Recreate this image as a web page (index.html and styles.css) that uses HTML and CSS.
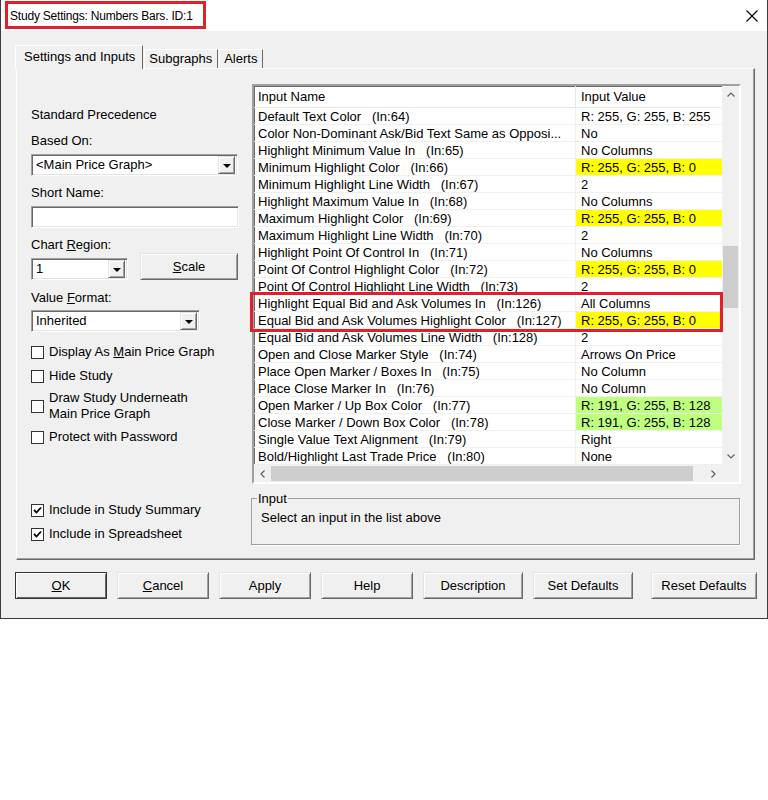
FILE: index.html
```html
<!DOCTYPE html>
<html lang="en">
<head>
  <meta charset="UTF-8" />
  <title>Study Settings</title>
  <link rel="stylesheet" href="styles.css">
</head>
<body>

<div class="window">
  <div class="titlebar">
    <span class="title">Study Settings: Numbers Bars. ID:1</span>
    <svg class="close" width="12" height="12" viewBox="0 0 12 12"><path d="M0.5 0.5 L11.5 11.5 M11.5 0.5 L0.5 11.5" stroke="#000" stroke-width="1.1" fill="none"/></svg>
  </div>
  <div class="title-mark"></div>

  <div class="client">
    <div class="tabs">
      <div class="tab active">Settings and Inputs</div>
      <div class="tab">Subgraphs</div>
      <div class="tab">Alerts</div>
    </div>

    <div class="panel">
      <div class="left">
        <div class="label first">Standard Precedence</div>
        <div class="label gap10">Based On:</div>
        <div class="combo wide">
          <span class="combo-text">&lt;Main Price Graph&gt;</span>
          <span class="drop"><i></i></span>
        </div>
        <div class="label gap9">Short Name:</div>
        <div class="textbox"></div>
        <div class="label gap9">Chart <u>R</u>egion:</div>
        <div class="region-row">
          <div class="combo small">
            <span class="combo-text">1</span>
            <span class="drop"><i></i></span>
          </div>
          <button class="btn scale"><u>S</u>cale</button>
        </div>
        <div class="label gap10">Value <u>F</u>ormat:</div>
        <div class="combo mid">
          <span class="combo-text">Inherited</span>
          <span class="drop"><i></i></span>
        </div>

        <div class="check c1"><span class="box"></span><span>Display As <u>M</u>ain Price Graph</span></div>
        <div class="check c2"><span class="box"></span><span>Hide Study</span></div>
        <div class="check c3"><span class="box"></span><span>Draw Study Underneath<br>Main Price Graph</span></div>
        <div class="check c4"><span class="box"></span><span>Protect with Password</span></div>
        <div class="check c5"><span class="box"><svg width="9" height="9" viewBox="0 0 9 9"><path d="M1 4 L3.5 6.5 L8 1.5" stroke="#000" stroke-width="1.8" fill="none"/></svg></span><span>Include in Study Summary</span></div>
        <div class="check c6"><span class="box"><svg width="9" height="9" viewBox="0 0 9 9"><path d="M1 4 L3.5 6.5 L8 1.5" stroke="#000" stroke-width="1.8" fill="none"/></svg></span><span>Include in Spreadsheet</span></div>
      </div>

      <div class="right">
        <div class="grid">
          <div class="grid-body">
            <div class="list">
              <div class="row head"><div class="c-name">Input Name</div><div class="c-val">Input Value</div></div>
              <div class="row"><div class="c-name">Default Text Color   (In:64)</div><div class="c-val">R: 255, G: 255, B: 255</div></div>
              <div class="row"><div class="c-name">Color Non-Dominant Ask/Bid Text Same as Opposi...</div><div class="c-val">No</div></div>
              <div class="row"><div class="c-name">Highlight Minimum Value In   (In:65)</div><div class="c-val">No Columns</div></div>
              <div class="row"><div class="c-name">Minimum Highlight Color   (In:66)</div><div class="c-val yellow">R: 255, G: 255, B: 0</div></div>
              <div class="row"><div class="c-name">Minimum Highlight Line Width   (In:67)</div><div class="c-val">2</div></div>
              <div class="row"><div class="c-name">Highlight Maximum Value In   (In:68)</div><div class="c-val">No Columns</div></div>
              <div class="row"><div class="c-name">Maximum Highlight Color   (In:69)</div><div class="c-val yellow">R: 255, G: 255, B: 0</div></div>
              <div class="row"><div class="c-name">Maximum Highlight Line Width   (In:70)</div><div class="c-val">2</div></div>
              <div class="row"><div class="c-name">Highlight Point Of Control In   (In:71)</div><div class="c-val">No Columns</div></div>
              <div class="row"><div class="c-name">Point Of Control Highlight Color   (In:72)</div><div class="c-val yellow">R: 255, G: 255, B: 0</div></div>
              <div class="row"><div class="c-name">Point Of Control Highlight Line Width   (In:73)</div><div class="c-val">2</div></div>
              <div class="row"><div class="c-name">Highlight Equal Bid and Ask Volumes In   (In:126)</div><div class="c-val">All Columns</div></div>
              <div class="row"><div class="c-name">Equal Bid and Ask Volumes Highlight Color   (In:127)</div><div class="c-val yellow">R: 255, G: 255, B: 0</div></div>
              <div class="row"><div class="c-name">Equal Bid and Ask Volumes Line Width   (In:128)</div><div class="c-val">2</div></div>
              <div class="row"><div class="c-name">Open and Close Marker Style   (In:74)</div><div class="c-val">Arrows On Price</div></div>
              <div class="row"><div class="c-name">Place Open Marker / Boxes In   (In:75)</div><div class="c-val">No Column</div></div>
              <div class="row"><div class="c-name">Place Close Marker In   (In:76)</div><div class="c-val">No Column</div></div>
              <div class="row"><div class="c-name">Open Marker / Up Box Color   (In:77)</div><div class="c-val green">R: 191, G: 255, B: 128</div></div>
              <div class="row"><div class="c-name">Close Marker / Down Box Color   (In:78)</div><div class="c-val green">R: 191, G: 255, B: 128</div></div>
              <div class="row"><div class="c-name">Single Value Text Alignment   (In:79)</div><div class="c-val">Right</div></div>
              <div class="row"><div class="c-name">Bold/Highlight Last Trade Price   (In:80)</div><div class="c-val">None</div></div>
            </div>
            <div class="vscroll">
              <span class="arrow"><svg width="8" height="5" viewBox="0 0 8 5"><path d="M0.5 4.5 L4 1 L7.5 4.5" stroke="#606060" stroke-width="1.2" fill="none"/></svg></span>
              <div class="vthumb"></div>
              <span class="arrow bottom"><svg width="8" height="5" viewBox="0 0 8 5"><path d="M0.5 0.5 L4 4 L7.5 0.5" stroke="#606060" stroke-width="1.2" fill="none"/></svg></span>
            </div>
          </div>
          <div class="hscroll-row">
            <div class="hscroll">
              <span class="arrow"><svg width="5" height="8" viewBox="0 0 5 8"><path d="M4.5 0.5 L1 4 L4.5 7.5" stroke="#606060" stroke-width="1.2" fill="none"/></svg></span>
              <div class="hthumb"></div>
              <span class="arrow"><svg width="5" height="8" viewBox="0 0 5 8"><path d="M0.5 0.5 L4 4 L0.5 7.5" stroke="#606060" stroke-width="1.2" fill="none"/></svg></span>
            </div>
            <div class="corner"></div>
          </div>
          <div class="grid-mark"></div>
        </div>

        <fieldset class="info">
          <legend>Input</legend>
          <p>Select an input in the list above</p>
        </fieldset>
      </div>
    </div>

    <div class="buttons">
      <button class="btn dlg default"><u>O</u>K</button>
      <button class="btn dlg"><u>C</u>ancel</button>
      <button class="btn dlg">Apply</button>
      <button class="btn dlg">Help</button>
      <button class="btn dlg w100">Description</button>
      <button class="btn dlg w100">Set Defaults</button>
      <button class="btn dlg w106">Reset Defaults</button>
    </div>
  </div>
</div>

</body>
</html>
```

FILE: styles.css
```css
* { box-sizing: border-box; }

body {
  margin: 0;
  background: #fff;
  font-family: "Liberation Sans", Arial, sans-serif;
  font-size: 13px;
  color: #000;
}

u { text-decoration: underline; text-underline-offset: 1px; }

.window {
  position: relative;
  width: 768px;
  height: 619px;
  border: 1px solid #3c3c3c;
  border-top: none;
  background: #f0f0f0;
}

/* title bar */
.titlebar {
  height: 31px;
  background: #fff;
  display: flex;
  align-items: center;
  padding: 0 0 0 9px;
}

.title {
  font-size: 12px;
  letter-spacing: -0.2px;
  flex: 1;
}

.close { margin-right: 9px; }

.title-mark {
  position: absolute;
  left: 4px;
  top: 1px;
  width: 201px;
  height: 28px;
  border: 3px solid #e0202a;
}

/* tabs */
.client { padding: 14px 0 0 14px; }

.tabs {
  display: flex;
  align-items: flex-end;
  height: 23px;
  position: relative;
  z-index: 1;
}

.tab {
  height: 19px;
  padding: 0 5px 0 4px;
  line-height: 18px;
  border: 1px solid #fff;
  border-bottom: none;
  border-right-color: #696969;
  background: #f0f0f0;
  margin-left: 1px;
}

.tab.active {
  height: 24px;
  margin-left: 0;
  padding: 1px 7px 0 8px;
  line-height: 20px;
  margin-bottom: -1px;
}

.panel {
  margin-left: 1px;
  width: 739px;
  height: 492px;
  border: 1px solid;
  border-color: #fff #696969 #696969 #fff;
  box-shadow: inset -1px -1px 0 #a0a0a0;
  padding: 15px 0 0 14px;
  display: flex;
}

/* left column */
.left { width: 207px; }

.label { line-height: 16px; height: 16px; }
.label.first { margin-top: 23px; }
.gap10 { margin-top: 10px; }
.gap9 { margin-top: 9px; }

.combo, .textbox {
  height: 22px;
  background: #fff;
  border: 1px solid;
  border-color: #a0a0a0 #fff #fff #a0a0a0;
  box-shadow: inset 1px 1px 0 #696969, inset -1px -1px 0 #e3e3e3;
}

.combo {
  margin-top: 5px;
  display: flex;
  align-items: center;
  padding: 2px 2px 2px 4px;
}

.combo-text { flex: 1; line-height: 16px; }

.combo.wide { width: 207px; }
.combo.small { width: 97px; margin-top: 5px; }
.combo.mid { width: 169px; margin-top: 4px; }

.drop {
  width: 17px;
  height: 18px;
  background: #f0f0f0;
  border: 1px solid;
  border-color: #e3e3e3 #696969 #696969 #e3e3e3;
  box-shadow: inset 1px 1px 0 #fff, inset -1px -1px 0 #a0a0a0;
  display: flex;
  align-items: center;
  justify-content: center;
}

.drop i {
  width: 0;
  height: 0;
  border-left: 4px solid transparent;
  border-right: 4px solid transparent;
  border-top: 4px solid #000;
  margin-top: 1px;
}

.textbox { margin-top: 5px; width: 208px; }

.region-row {
  display: flex;
  justify-content: space-between;
  align-items: flex-start;
  height: 27px;
}

.btn {
  font-family: inherit;
  font-size: 13px;
  color: #000;
  background: #f0f0f0;
  border: 1px solid;
  border-color: #e3e3e3 #696969 #696969 #e3e3e3;
  box-shadow: inset 1px 1px 0 #fff, inset -1px -1px 0 #a0a0a0;
  padding: 0;
}

.btn.scale { width: 98px; height: 27px; }

.check {
  display: flex;
  align-items: center;
  line-height: 16px;
}

.box {
  width: 13px;
  height: 13px;
  background: #fff;
  border: 1px solid #333;
  margin-right: 5px;
  flex: none;
  display: flex;
  align-items: center;
  justify-content: center;
}

.c1 { margin-top: 12px; }
.c2 { margin-top: 8px; }
.c3 { margin-top: 6px; }
.c4 { margin-top: 7px; }
.c5 { margin-top: 57px; }
.c6 { margin-top: 8px; }

/* right column */
.right {
  margin-left: 14px;
  width: 489px;
}

.grid {
  position: relative;
  height: 400px;
  background: #fff;
  border: 2px solid;
  border-color: #a0a0a0 #fff #fff #a0a0a0;
  box-shadow: inset 1px 1px 0 #696969;
}

.grid-body { display: flex; height: 379px; }

.list { width: 468px; overflow: hidden; }

.row {
  display: flex;
  height: 17px;
  line-height: 17px;
  white-space: pre;
}

.c-name {
  width: 322px;
  padding-left: 4px;
  border-right: 1px solid #f0f0f0;
  border-bottom: 1px solid #f0f0f0;
  overflow: hidden;
}

.c-val {
  flex: 1;
  padding-left: 5px;
  border-bottom: 1px solid #f0f0f0;
  overflow: hidden;
}

.c-val.yellow { background: #ffff00; }
.c-val.green { background: #bfff80; }

.row.head { height: 22px; line-height: 19px; }
.row.head .c-name { border-bottom: 1px solid #e5e5e5; border-right-color: #e5e5e5; padding-top: 1px; }
.row.head .c-val { border-bottom: 1px solid #e5e5e5; padding-top: 1px; margin-right: 1px; }

.vscroll {
  width: 17px;
  background: #f0f0f0;
  display: flex;
  flex-direction: column;
  align-items: center;
}

.arrow {
  width: 17px;
  height: 17px;
  display: flex;
  align-items: center;
  justify-content: center;
  flex: none;
}

.arrow.bottom { margin-top: auto; }

.vthumb {
  width: 15px;
  height: 62px;
  margin-top: 143px;
  background: #cdcdcd;
}

.hscroll-row { display: flex; height: 17px; }

.hscroll {
  width: 468px;
  background: #f0f0f0;
  display: flex;
  align-items: center;
}

.hthumb {
  width: 422px;
  height: 15px;
  background: #cdcdcd;
  margin-right: auto;
}

.corner { flex: 1; background: #f0f0f0; }

.grid-mark {
  position: absolute;
  left: -4px;
  top: 206px;
  width: 473px;
  height: 40px;
  border: 3px solid #e0202a;
}

.info {
  margin: 7px 0 0 -1px;
  width: 489px;
  height: 54px;
  border: 1px solid #a0a0a0;
  box-shadow: 1px 1px 0 #fff;
  padding: 0 0 0 9px;
}

.info legend {
  padding: 0 1px;
  margin-left: -4px;
  line-height: 15px;
}

.info p { margin: 4px 0 0; }

/* dialog buttons */
.buttons {
  display: flex;
  margin-top: 12px;
  padding-left: 0;
}

.btn.dlg {
  width: 92px;
  height: 27px;
  margin-right: 10px;
}

.btn.default {
  border-color: #333;
  box-shadow: inset 1px 1px 0 #fff, inset -1px -1px 0 #696969;
}

.btn.w100 { width: 100px; margin-right: 10px; }
.btn.w106 { width: 106px; margin-left: 8px; }
```
